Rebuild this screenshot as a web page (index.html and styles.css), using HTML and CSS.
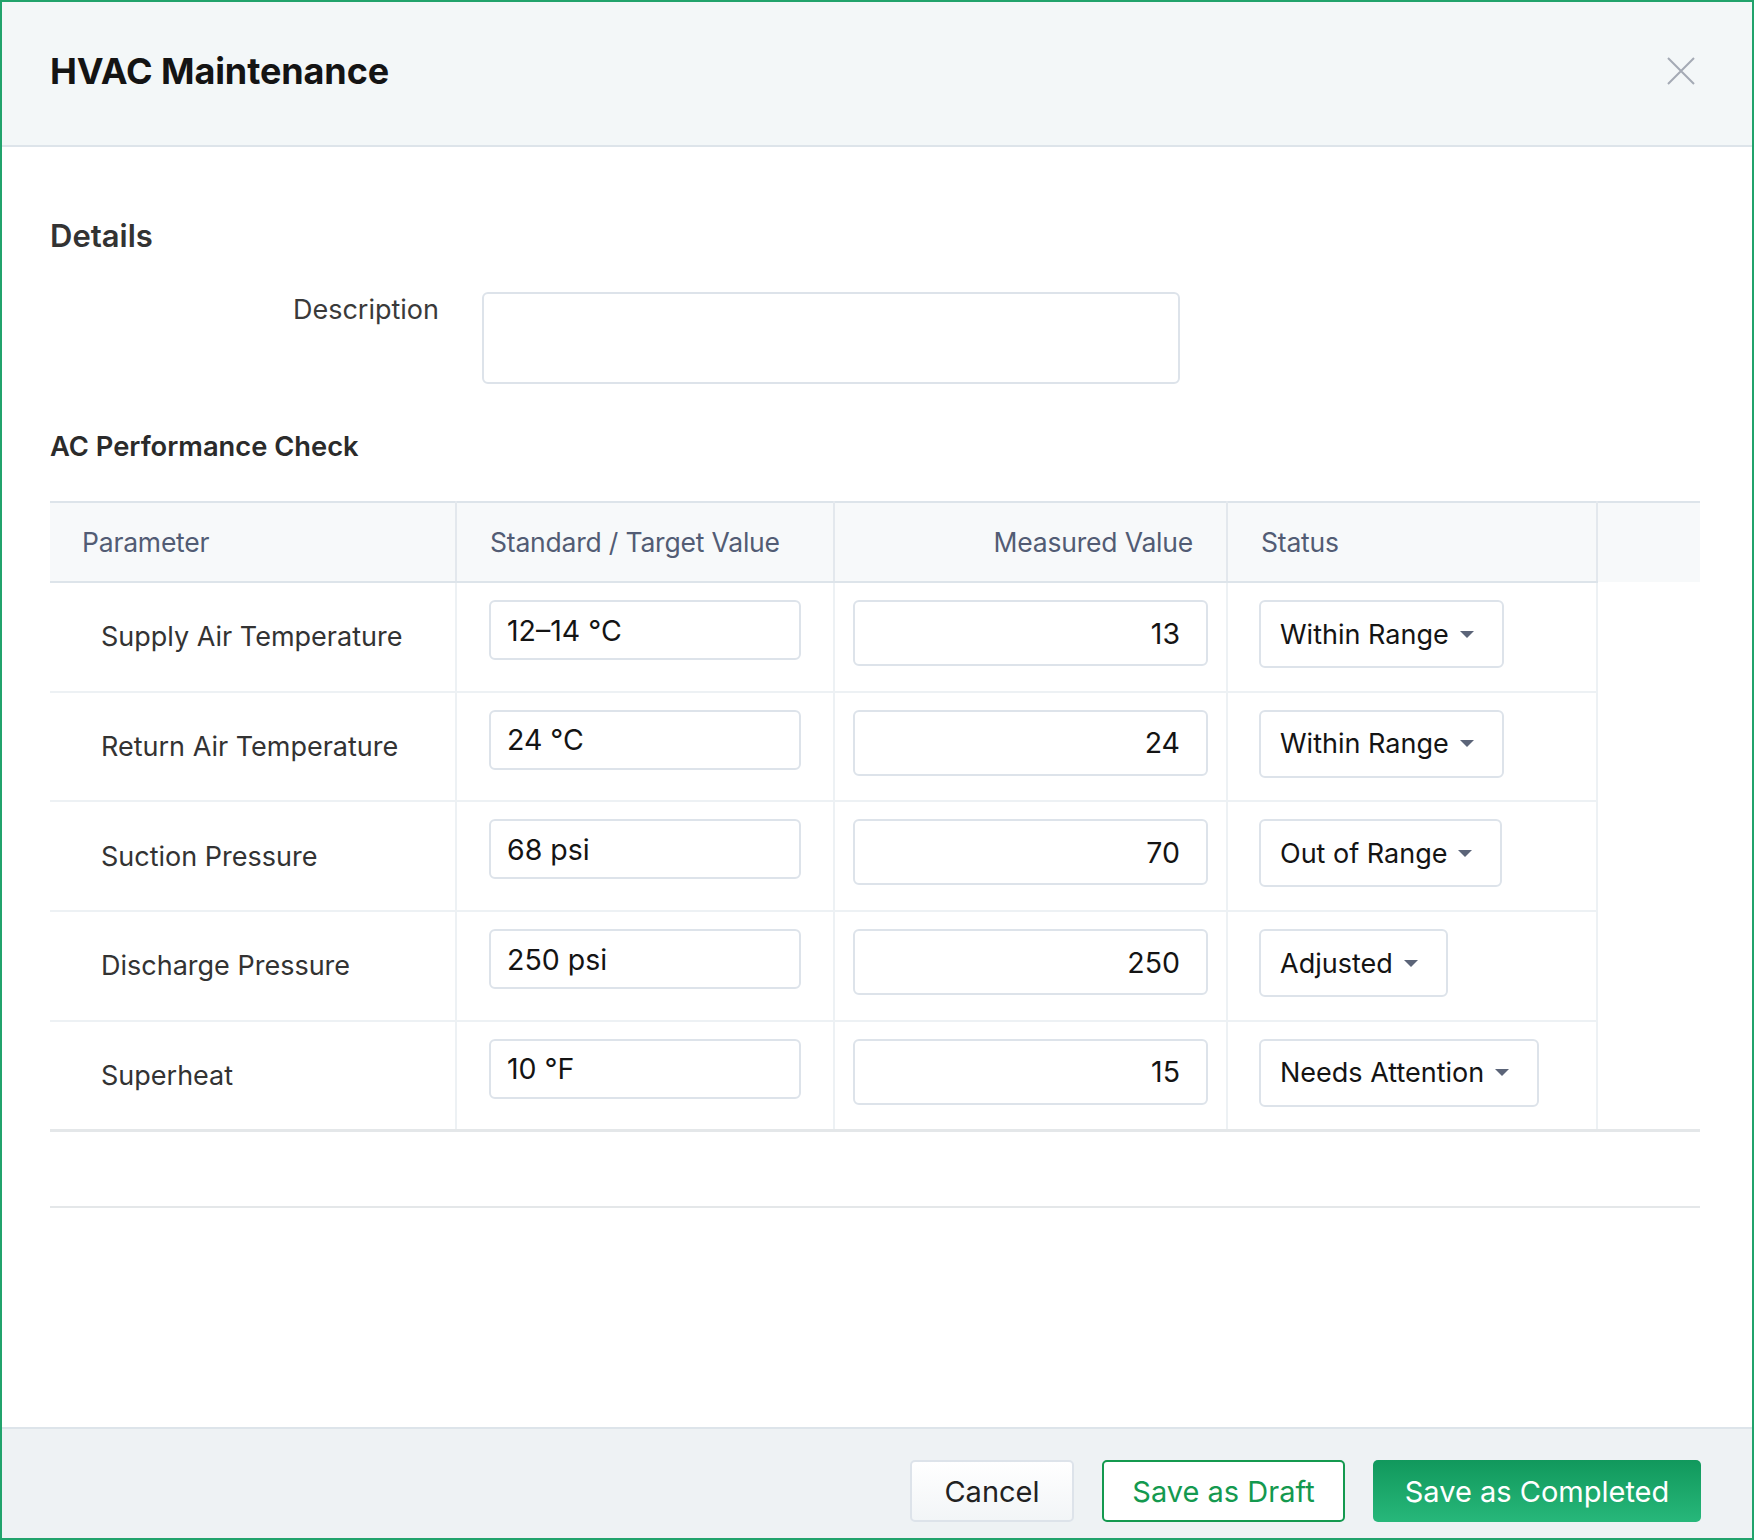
FILE: index.html
```html
<!DOCTYPE html>
<html lang="en">
<head>
    <meta charset="UTF-8">
    <meta name="viewport" content="width=device-width, initial-scale=1.0">
    <title>HVAC Maintenance</title>
    <link rel="stylesheet" href="styles.css">
</head>
<body>
    <div class="modal">
        <div class="modal-header">
            <h1>HVAC Maintenance</h1>
            <button class="close-btn" type="button" aria-label="Close">
                <svg width="28" height="28" viewBox="0 0 28 28">
                    <path d="M1 1 L27 27 M27 1 L1 27" stroke="#a4aab5" stroke-width="2" fill="none"/>
                </svg>
            </button>
        </div>

        <div class="modal-body">
            <h2 class="section-title">Details</h2>
            <div class="field-row">
                <label for="description">Description</label>
                <textarea id="description"></textarea>
            </div>

            <h3 class="sub-title">AC Performance Check</h3>
            <table class="check-table">
                <colgroup>
                    <col style="width: 406px">
                    <col style="width: 378px">
                    <col style="width: 393px">
                    <col style="width: 370px">
                    <col>
                </colgroup>
                <thead>
                    <tr>
                        <th>Parameter</th>
                        <th>Standard / Target Value</th>
                        <th class="num">Measured Value</th>
                        <th>Status</th>
                        <th class="filler"></th>
                    </tr>
                </thead>
                <tbody>
                    <tr>
                        <td class="param">Supply Air Temperature</td>
                        <td class="std"><div class="box">12–14 °C</div></td>
                        <td class="measured"><div class="box">13</div></td>
                        <td class="status"><div class="select">Within Range <span class="caret"></span></div></td>
                        <td class="filler"></td>
                    </tr>
                    <tr>
                        <td class="param">Return Air Temperature</td>
                        <td class="std"><div class="box">24 °C</div></td>
                        <td class="measured"><div class="box">24</div></td>
                        <td class="status"><div class="select">Within Range <span class="caret"></span></div></td>
                        <td class="filler"></td>
                    </tr>
                    <tr>
                        <td class="param">Suction Pressure</td>
                        <td class="std"><div class="box">68 psi</div></td>
                        <td class="measured"><div class="box">70</div></td>
                        <td class="status"><div class="select">Out of Range <span class="caret"></span></div></td>
                        <td class="filler"></td>
                    </tr>
                    <tr>
                        <td class="param">Discharge Pressure</td>
                        <td class="std"><div class="box">250 psi</div></td>
                        <td class="measured"><div class="box">250</div></td>
                        <td class="status"><div class="select">Adjusted <span class="caret"></span></div></td>
                        <td class="filler"></td>
                    </tr>
                    <tr>
                        <td class="param">Superheat</td>
                        <td class="std"><div class="box">10 °F</div></td>
                        <td class="measured"><div class="box">15</div></td>
                        <td class="status"><div class="select">Needs Attention <span class="caret"></span></div></td>
                        <td class="filler"></td>
                    </tr>
                </tbody>
            </table>
            <div class="table-footer"></div>
        </div>

        <div class="modal-footer">
            <button class="btn btn-cancel" type="button">Cancel</button>
            <button class="btn btn-draft" type="button">Save as Draft</button>
            <button class="btn btn-primary" type="button">Save as Completed</button>
        </div>
    </div>
</body>
</html>
```

FILE: styles.css
```css
* {
    box-sizing: border-box;
}
body {
    margin: 0;
    font-family: Inter, "Noto Sans", sans-serif;
    color: #333;
    background: #fff;
}
.modal {
    width: 1754px;
    height: 1540px;
    border: 2px solid #21a36c;
    display: flex;
    flex-direction: column;
    overflow: hidden;
}
.modal-header {
    height: 145px;
    flex-shrink: 0;
    background-color: #f3f7f8;
    border-bottom: 2px solid #dde4ea;
    display: flex;
    align-items: center;
    justify-content: space-between;
    padding: 0 57px 6px 48px;
}
.modal-header h1 {
    margin: 0;
    font-size: 36px;
    font-weight: 700;
    color: #141414;
    letter-spacing: -0.1px;
}
.close-btn {
    background: none;
    border: none;
    padding: 0;
    cursor: pointer;
    display: flex;
}
.modal-body {
    flex: 1;
    padding: 71px 51px 0 48px;
}
.section-title {
    margin: 0;
    font-size: 31px;
    line-height: 36px;
    font-weight: 600;
    color: #333;
}
.field-row {
    display: flex;
    align-items: flex-start;
    margin-top: 38px;
}
.field-row label {
    width: 389px;
    text-align: right;
    font-size: 27px;
    line-height: 36px;
    color: #3a3a3a;
}
.field-row textarea {
    margin-left: 43px;
    width: 698px;
    height: 92px;
    border: 2px solid #dde3ea;
    border-radius: 6px;
    resize: none;
    font: inherit;
}
.sub-title {
    margin: 45px 0 0;
    font-size: 27.3px;
    line-height: 36px;
    font-weight: 600;
    color: #2b2b2b;
}
.check-table {
    margin-top: 36px;
    width: 1650px;
    border-collapse: collapse;
    table-layout: fixed;
    font-size: 27px;
}
.check-table thead tr {
    height: 80px;
    background-color: #f7f9fa;
    border-top: 2px solid #dde4ea;
}
.check-table th {
    text-align: left;
    font-weight: 400;
    font-size: 26.5px;
    letter-spacing: -0.2px;
    color: #525c74;
    padding: 0 33px;
    border-left: 2px solid #e3e8ed;
    border-bottom: 2px solid #dde4ea;
}
.check-table th:first-child {
    border-left: none;
    padding-left: 32px;
}
.check-table th.num {
    text-align: right;
}
.check-table th.filler {
    border-bottom: none;
}
.check-table tbody tr {
    height: 109.7px;
}
.check-table td {
    vertical-align: top;
    padding: 17px 32px 0;
    border-left: 2px solid #edf1f4;
    border-bottom: 2px solid #edf1f4;
}
.check-table td.param {
    border-left: none;
    vertical-align: middle;
    padding: 0 0 0 51px;
    color: #333;
}
.check-table td.measured {
    padding: 17px 18px 0;
}
.check-table td.status {
    padding-left: 31px;
}
.check-table td.filler {
    border-bottom: none;
}
.check-table tbody tr:last-child td {
    border-bottom: 3px solid #e4e7e9;
}
.box {
    border: 2px solid #dde3ea;
    border-radius: 6px;
    color: #141414;
    display: flex;
    align-items: center;
    font-size: 28.5px;
}
.std .box {
    height: 60px;
    padding: 0 16px;
}
.measured .box {
    height: 66px;
    justify-content: flex-end;
    padding: 0 26px;
}
.select {
    display: inline-flex;
    align-items: center;
    height: 68px;
    padding: 0 28px 0 19px;
    border: 2px solid #dde3ea;
    border-radius: 6px;
    color: #141414;
    white-space: nowrap;
}
.caret {
    margin-left: 11px;
    width: 0;
    height: 0;
    border-left: 7px solid transparent;
    border-right: 7px solid transparent;
    border-top: 7px solid #5b6478;
}
.table-footer {
    height: 76px;
    border-bottom: 2px solid #e4e7e9;
    width: 1650px;
}
.modal-footer {
    flex-shrink: 0;
    height: 111px;
    background-color: #eef2f4;
    border-top: 2px solid #dde4ea;
    display: flex;
    justify-content: flex-end;
    align-items: flex-start;
    gap: 28px;
    padding: 31px 51px 0 0;
}
.btn {
    height: 62px;
    font-family: Inter, "Noto Sans", sans-serif;
    font-size: 29px;
    border-radius: 5px;
    cursor: pointer;
    padding: 0 20px;
}
.btn-cancel {
    width: 164px;
    background: linear-gradient(#ffffff, #f2f5f7);
    border: 2px solid #dde3ea;
    color: #222;
}
.btn-draft {
    width: 243px;
    background: #fff;
    border: 2px solid #14994f;
    color: #14994f;
}
.btn-primary {
    width: 328px;
    background: linear-gradient(#11985c, #27b77a);
    border: none;
    color: #fff;
}
```
